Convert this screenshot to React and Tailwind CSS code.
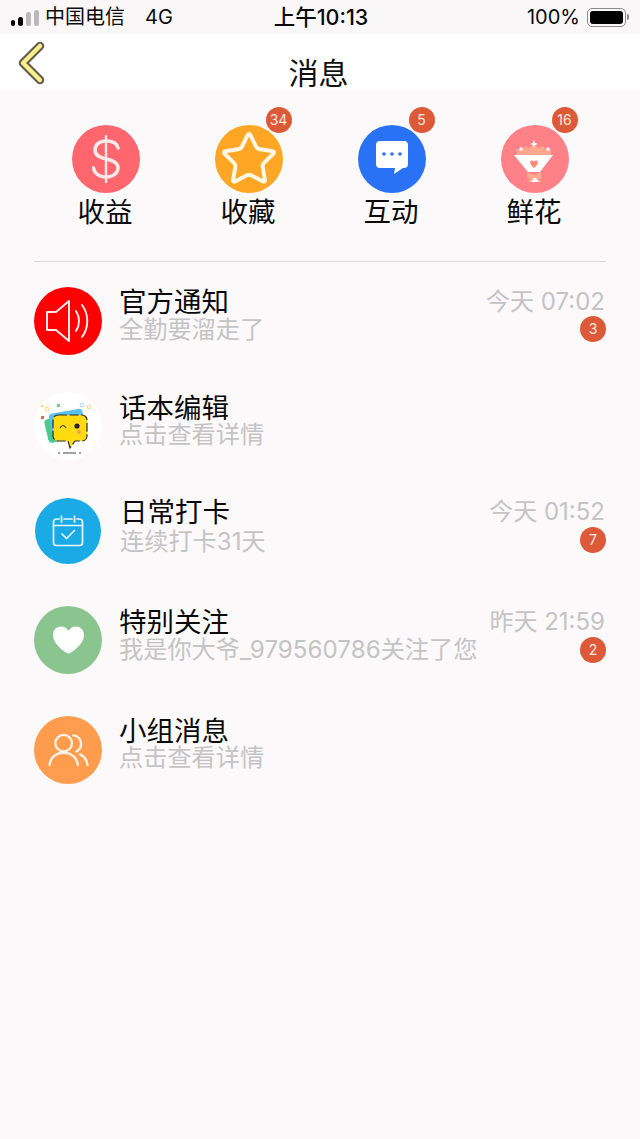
import React from 'react';
import { Star } from 'lucide-react';

const BackIcon = () => (
  <svg width="30" height="44" viewBox="0 0 30 44" fill="none">
    <path d="M24 5 L7 22 L24 39" stroke="#5e5c50" strokeWidth="8.5" strokeLinecap="round" strokeLinejoin="round" />
    <path d="M24 5 L7 22 L24 39" stroke="#fbef8a" strokeWidth="4.5" strokeLinecap="round" strokeLinejoin="round" />
  </svg>
);

const DollarIcon = () => (
  <svg width="28" height="48" viewBox="0 0 28 48" fill="none" stroke="#ffe8e8" strokeLinecap="round">
    <path d="M26 13 C25 8 20 6 14 6 C7 6 3 10 3 15 C3 20 7 22.5 14 24 C22 25.5 26 28 26 33 C26 38 21 42 14 42 C7 42 2 38 1.5 33" strokeWidth="3.6" />
    <path d="M14 1 V47" strokeWidth="2.4" />
  </svg>
);

const ChatIcon = () => (
  <svg width="32" height="34" viewBox="0 0 32 34" className="-mt-[2px]">
    <path d="M4 0 H28 A4 4 0 0 1 32 4 V23 A4 4 0 0 1 28 27 H27 L18 33 L19 27 H4 A4 4 0 0 1 0 23 V4 A4 4 0 0 1 4 0 Z" fill="#fff" />
    <circle cx="8" cy="13" r="1.8" fill="#2a72f5" />
    <circle cx="16" cy="13" r="1.8" fill="#2a72f5" />
    <circle cx="24" cy="13" r="1.8" fill="#2a72f5" />
  </svg>
);

const BouquetIcon = () => (
  <svg width="68" height="68" viewBox="0 0 68 68">
    <path d="M16 30 L15 24 L21 25 L24 21 L28 23 L33 19 L38 23 L42 21 L45 25 L50 24 L50 30 Z" fill="#ffa68f" />
    <path d="M33 15 L34 18 L37 19 L34 20 L33 23 L32 20 L29 19 L32 18 Z" fill="#fff" />
    <circle cx="20" cy="24" r="1.8" fill="#fff" />
    <circle cx="47" cy="24" r="1.8" fill="#fff" />
    <path d="M13 30 H52 L39 47 H27 Z" fill="#fff" />
    <path d="M33 43 C29 40 28 36 30.5 35.5 C32 35.2 33 36.2 33 37 C33 36.2 34 35.2 35.5 35.5 C38 36 37 40 33 43 Z" fill="#ff8a78" />
    <path d="M26 47 L33 50 L40 47 L41 53 L38 54 L41 57 H26 L29 54 L26 53 Z" fill="#ffa68f" />
    <path d="M30 57 L33 53 H35 L38 57 Z" fill="#fff" />
  </svg>
);

const SpeakerIcon = () => (
  <svg width="46" height="44" viewBox="0 0 46 44" fill="none" stroke="#ffeaea" strokeLinejoin="round" strokeLinecap="round">
    <path d="M2 13 H11 L24 2 V42 L11 31 H2 Z" strokeWidth="2" />
    <path d="M31 12 C35 18 35 26 31 32" strokeWidth="2" />
    <path d="M37 6 C44 15 44 29 37 38" strokeWidth="2" />
  </svg>
);

const TalkIcon = () => (
  <svg width="68" height="68" viewBox="0 0 68 68">
    <circle cx="34" cy="34" r="34" fill="#fff" />
    <circle cx="13" cy="17" r="2" fill="none" stroke="#f5d76e" />
    <rect x="7" y="13" width="2" height="2" fill="#f5d76e" />
    <rect x="23" y="12" width="3" height="3" fill="#6ccf8a" />
    <circle cx="48" cy="13" r="2" fill="none" stroke="#a9d8f5" />
    <circle cx="55" cy="15" r="2" fill="none" stroke="#f5d76e" />
    <rect x="7" y="24" width="3" height="3" fill="#e8665a" />
    <rect x="14" y="46" width="3" height="2" fill="#5cc0ee" />
    <rect x="12" y="24" width="32" height="24" rx="4" fill="#47c98f" transform="rotate(-14 28 36)" />
    <rect x="16" y="19" width="34" height="22" rx="4" fill="#5cc0ee" transform="rotate(-10 33 30)" />
    <path d="M24 23 H48 A5 5 0 0 1 53 28 V44 A5 5 0 0 1 48 49 H41 L36 56 L34 49 H24 A5 5 0 0 1 19 44 V28 A5 5 0 0 1 24 23 Z" fill="#ffdb10" stroke="#2b2b2b" strokeWidth="1.2" strokeDasharray="9 2.5" />
    <path d="M26 36 Q29 31 32 36" fill="none" stroke="#333" strokeWidth="1.2" />
    <circle cx="43" cy="34" r="2.6" fill="#222" />
    <circle cx="45" cy="40" r="2" fill="#f59a5a" />
    <path d="M24 61 H26 M29 61 H42 M45 61 H47" stroke="#444" strokeWidth="1.2" />
  </svg>
);

const CalendarIcon = () => (
  <svg width="32" height="34" viewBox="0 0 32 34" fill="none" stroke="#e8f7fd" strokeWidth="1.7" strokeLinecap="round" strokeLinejoin="round">
    <path d="M7 5 H4.5 A3 3 0 0 0 1.5 8 V28.5 A3 3 0 0 0 4.5 31.5 H27.5 A3 3 0 0 0 30.5 28.5 V8 A3 3 0 0 0 27.5 5 H25" />
    <path d="M12 5 H20" />
    <path d="M9.5 2 V8 M22.5 2 V8" />
    <path d="M1.5 11.5 H30.5" />
    <path d="M10 20 L14.5 24.5 L22.5 16.5" />
  </svg>
);

const HeartIcon = () => (
  <svg width="33" height="30" viewBox="0 0 34 30">
    <path d="M17 29 C15.5 29 1 20 1 10 C1 4 5 1 9.5 1 C13 1 15.5 3 17 5.5 C18.5 3 21 1 24.5 1 C29 1 33 4 33 10 C33 20 18.5 29 17 29 Z" fill="#fff" />
  </svg>
);

const GroupIcon = () => (
  <svg width="41" height="34" viewBox="0 0 42 35" fill="none" stroke="#fff2e6" strokeWidth="2.4" strokeLinecap="round">
    <circle cx="16" cy="10.5" r="8.5" />
    <path d="M1.5 33 C2 25 8 20.5 16 20.5 C24 20.5 30 25 30.5 33" />
    <path d="M26 2.5 C31 3 34 7 34 11 C34 14.5 32 17.5 29 19" />
    <path d="M33 22 C37 24 40 28 40.5 33" />
  </svg>
);

const shortcuts = [
  { label: '收益', bg: 'bg-[#ff666d]', icon: <DollarIcon /> },
  { label: '收藏', bg: 'bg-[#ffa724]', badge: '34', icon: <Star size={60} strokeWidth={1.6} color="#fff6e6" /> },
  { label: '互动', bg: 'bg-[#2a72f5]', badge: '5', icon: <ChatIcon /> },
  { label: '鲜花', bg: 'bg-[#ff8188]', badge: '16', icon: <BouquetIcon /> },
];

const rows = [
  { title: '官方通知', sub: '全勤要溜走了', time: '今天 07:02', badge: '3', bg: 'bg-[#fe0000]', circle: 'h-[68px] w-[68px]', icon: <SpeakerIcon />, rowClass: 'mt-[25px]', textClass: 'pt-[1px]', subClass: '', badgeClass: '-mt-[2px]' },
  { title: '话本编辑', sub: '点击查看详情', bg: 'bg-white', circle: 'h-[68px] w-[68px]', icon: <TalkIcon />, rowClass: 'mt-[37px]', textClass: 'pt-[2px]', subClass: '-mt-[1px]', badgeClass: '' },
  { title: '日常打卡', sub: '连续打卡31天', time: '今天 01:52', badge: '7', bg: 'bg-[#1aabe6]', circle: 'mx-[1px] mt-[1px] h-[66px] w-[66px]', icon: <CalendarIcon />, rowClass: 'mt-[37px]', textClass: 'pt-[1px] pl-[1px]', subClass: 'mt-[2px]', badgeClass: '-mt-[4px]' },
  { title: '特别关注', sub: '我是你大爷_979560786关注了您', time: '昨天 21:59', badge: '2', bg: 'bg-[#8ac48f]', circle: 'h-[68px] w-[68px]', icon: <HeartIcon />, rowClass: 'mt-[41px]', textClass: 'pt-[2px]', subClass: '', badgeClass: '' },
  { title: '小组消息', sub: '点击查看详情', bg: 'bg-[#ff9c4d]', circle: 'h-[68px] w-[68px]', icon: <GroupIcon />, rowClass: 'mt-[42px]', textClass: 'pt-[1px]', subClass: '-mt-[1px]', badgeClass: '' },
];

function Badge({ children, className = '' }) {
  return (
    <span className={`flex h-[26px] w-[26px] items-center justify-center rounded-full bg-[#dc5a38] text-[14px] leading-none text-[#fbe6e0] ${className}`}>
      {children}
    </span>
  );
}

export default function App() {
  return (
    <div className="h-[1139px] w-[640px] overflow-hidden bg-[#fbf9fa] font-['Inter','Noto_Sans_CJK_SC',sans-serif] text-[#0a0a0a]">
      {/* status bar */}
      <div className="flex h-[34px] items-center justify-between bg-[#f9f7f8] pl-[11px] pr-[11px] text-[20px]">
        <div className="flex w-[240px] items-center">
          <div className="flex items-end gap-[3px] pt-[1px]">
            <span className="h-[6px] w-[4px] rounded-full bg-black" />
            <span className="h-[9px] w-[5px] rounded-full bg-black" />
            <span className="h-[14px] w-[5px] rounded-full bg-[#b9b9b9]" />
            <span className="h-[16px] w-[5px] rounded-full bg-[#b9b9b9]" />
          </div>
          <span className="ml-[6px]">中国电信</span>
          <span className="ml-[20px]">4G</span>
        </div>
        <span className="pl-[2px] text-[21.5px] font-medium">上午10:13</span>
        <div className="flex w-[240px] items-center justify-end">
          <span>100%</span>
          <div className="ml-[7px] flex h-[19px] w-[39px] rounded-[5px] border border-[#8a8a8a] p-[2px]">
            <div className="flex-1 rounded-[3px] bg-black" />
          </div>
          <span className="ml-[1px] h-[6px] w-[2px] rounded-r-sm bg-[#8a8a8a]" />
        </div>
      </div>

      {/* nav bar */}
      <div className="relative flex h-[56px] items-end justify-center bg-white pr-[3px]">
        <span className="absolute left-[16px] top-[7px]"><BackIcon /></span>
        <span className="text-[30px] leading-[34px] text-[#111]">消息</span>
      </div>

      {/* shortcuts */}
      <div className="grid grid-cols-4 px-[34px] pt-[35px]">
        {shortcuts.map((item) => (
          <div key={item.label} className="flex flex-col items-center">
            <div className={`relative flex h-[68px] w-[68px] items-center justify-center rounded-full ${item.bg}`}>
              {item.icon}
              {item.badge && <Badge className="absolute -right-[9px] -top-[18px]">{item.badge}</Badge>}
            </div>
            <span className="pb-[1px] pr-[1px] pt-[1px] text-[27.5px] leading-[36px]">{item.label}</span>
          </div>
        ))}
      </div>

      <div className="mx-[34px] mt-[30px] h-px bg-[#d8d8d8]" />

      {/* message list */}
      <div className="px-[34px]">
        {rows.map((row) => (
          <div key={row.title} className={`flex h-[68px] items-start ${row.rowClass}`}>
            <div className={`flex shrink-0 items-center justify-center overflow-hidden rounded-full ${row.circle} ${row.bg}`}>
              {row.icon}
            </div>
            <div className={`ml-[17px] min-w-0 flex-1 ${row.textClass}`}>
              <div className="flex h-[28px] items-center justify-between">
                <span className="text-[27.5px] leading-[28px]">{row.title}</span>
                {row.time && <span className="pr-[1px] text-[24px] leading-[28px] text-[#c4c4c4]">{row.time}</span>}
              </div>
              <div className={`flex h-[28px] items-center justify-between ${row.subClass}`}>
                <span className="text-[24.2px] leading-[28px] text-[#c4c4c4]">{row.sub}</span>
                {row.badge && <Badge className={row.badgeClass}>{row.badge}</Badge>}
              </div>
            </div>
          </div>
        ))}
      </div>
    </div>
  );
}
